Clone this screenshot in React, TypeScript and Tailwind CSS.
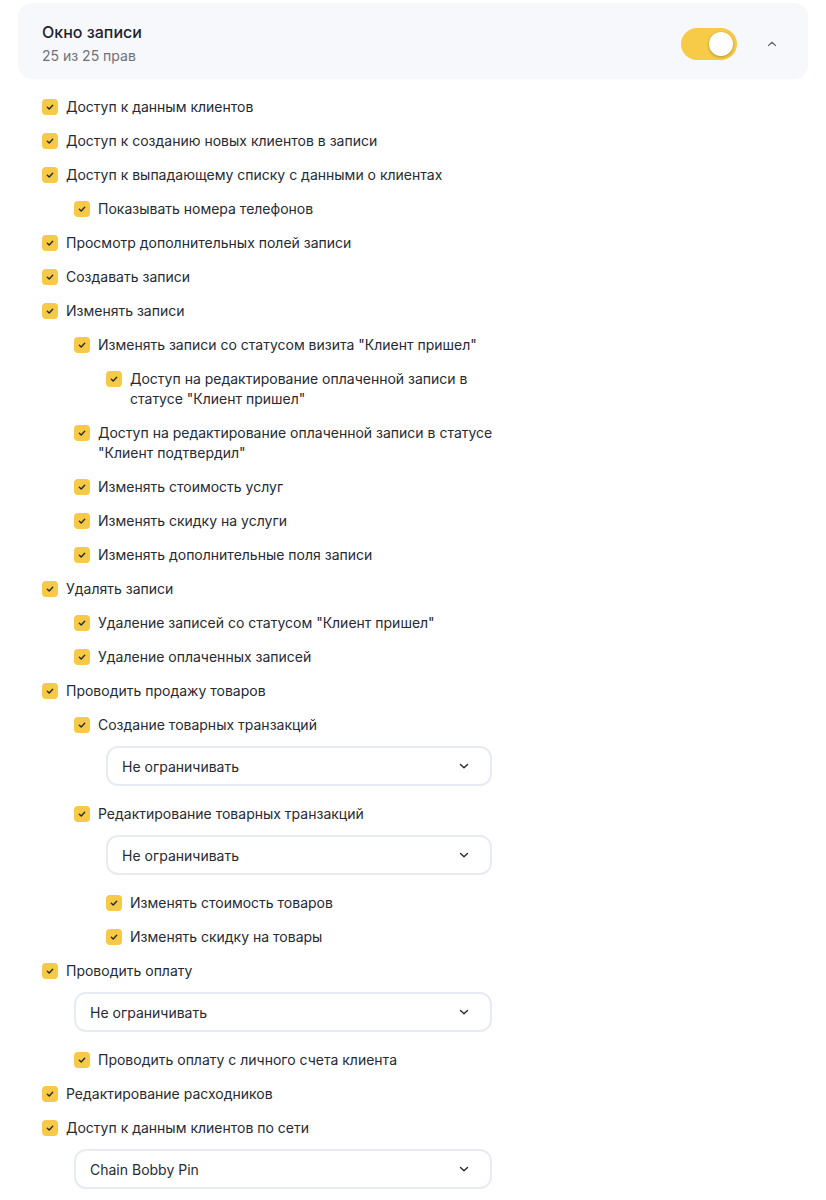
import React from "react";

type Item =
  | { kind: "row"; level: number; text: string }
  | { kind: "select"; level: number; text: string };

const items: Item[] = [
  { kind: "row", level: 0, text: "Доступ к данным клиентов" },
  { kind: "row", level: 0, text: "Доступ к созданию новых клиентов в записи" },
  { kind: "row", level: 0, text: "Доступ к выпадающему списку с данными о клиентах" },
  { kind: "row", level: 1, text: "Показывать номера телефонов" },
  { kind: "row", level: 0, text: "Просмотр дополнительных полей записи" },
  { kind: "row", level: 0, text: "Создавать записи" },
  { kind: "row", level: 0, text: "Изменять записи" },
  { kind: "row", level: 1, text: "Изменять записи со статусом визита \"Клиент пришел\"" },
  { kind: "row", level: 2, text: "Доступ на редактирование оплаченной записи в статусе \"Клиент пришел\"" },
  { kind: "row", level: 1, text: "Доступ на редактирование оплаченной записи в статусе \"Клиент подтвердил\"" },
  { kind: "row", level: 1, text: "Изменять стоимость услуг" },
  { kind: "row", level: 1, text: "Изменять скидку на услуги" },
  { kind: "row", level: 1, text: "Изменять дополнительные поля записи" },
  { kind: "row", level: 0, text: "Удалять записи" },
  { kind: "row", level: 1, text: "Удаление записей со статусом \"Клиент пришел\"" },
  { kind: "row", level: 1, text: "Удаление оплаченных записей" },
  { kind: "row", level: 0, text: "Проводить продажу товаров" },
  { kind: "row", level: 1, text: "Создание товарных транзакций" },
  { kind: "select", level: 2, text: "Не ограничивать" },
  { kind: "row", level: 1, text: "Редактирование товарных транзакций" },
  { kind: "select", level: 2, text: "Не ограничивать" },
  { kind: "row", level: 2, text: "Изменять стоимость товаров" },
  { kind: "row", level: 2, text: "Изменять скидку на товары" },
  { kind: "row", level: 0, text: "Проводить оплату" },
  { kind: "select", level: 1, text: "Не ограничивать" },
  { kind: "row", level: 1, text: "Проводить оплату с личного счета клиента" },
  { kind: "row", level: 0, text: "Редактирование расходников" },
  { kind: "row", level: 0, text: "Доступ к данным клиентов по сети" },
  { kind: "select", level: 1, text: "Chain Bobby Pin" },
];

const indent = ["pl-0", "pl-8", "pl-16"];

function Check() {
  return (
    <span className="mt-[2px] flex h-4 w-4 shrink-0 items-center justify-center rounded-[4px] bg-[#f7c948]">
      <svg width="10" height="10" viewBox="0 0 10 10" fill="none">
        <path d="M2.3 5.2 L4.2 7 L7.7 3.3" stroke="#2a2a2a" strokeWidth="1.4" strokeLinecap="round" strokeLinejoin="round" />
      </svg>
    </span>
  );
}

function Row({ level, text }: { level: number; text: string }) {
  return (
    <div className={`${indent[level]} flex items-start gap-2`}>
      <Check />
      <span className="text-[14px] leading-5 text-[#262a35]">{text}</span>
    </div>
  );
}

function Select({ level, text }: { level: number; text: string }) {
  return (
    <div className={`${indent[level]} mt-[-3px] mb-[4px] pr-[8px]`}>
      <div className="flex h-10 items-center justify-between rounded-[12px] border-2 border-[#e8eaf4] bg-white pl-[14px] pr-[20px]">
        <span className="text-[14px] text-[#262a35]">{text}</span>
        <svg width="12" height="12" viewBox="0 0 12 12" fill="none">
          <path d="M2.5 4.5 L6 7.8 L9.5 4.5" stroke="#2a2a2a" strokeWidth="1.4" strokeLinecap="round" strokeLinejoin="round" />
        </svg>
      </div>
    </div>
  );
}

export default function App() {
  return (
    <div className="min-h-[1200px] bg-white px-[18px] pt-[3px]" style={{ fontFamily: "Inter, 'Noto Sans', sans-serif" }}>
      <div className="flex items-center justify-between rounded-[14px] bg-[#f7f8fc] pb-[13px] pl-6 pr-6 pt-[18px]">
        <div className="flex flex-col">
          <span className="text-[16px] font-medium leading-[22px] text-[#1f2330]">Окно записи</span>
          <span className="mt-[3px] text-[14px] leading-5 text-[#6d717c]">25 из 25 прав</span>
        </div>
        <div className="flex items-center gap-[23px]">
          <div className="relative h-8 w-14 rounded-full bg-[#f7cb47]">
            <span className="absolute right-1 top-1 h-6 w-6 rounded-full bg-white shadow-[0_1px_3px_rgba(0,0,0,0.3)]" />
          </div>
          <div className="flex h-6 w-6 items-center justify-center">
            <svg width="12" height="12" viewBox="0 0 12 12" fill="none">
              <path d="M2.5 7.5 L6 4.2 L9.5 7.5" stroke="#6b6f78" strokeWidth="1.3" strokeLinecap="round" strokeLinejoin="round" />
            </svg>
          </div>
        </div>
      </div>
      <div className="mt-[18px] flex w-[482px] flex-col gap-[14px] pl-6">
        {items.map((it, i) =>
          it.kind === "row" ? (
            <Row key={i} level={it.level} text={it.text} />
          ) : (
            <Select key={i} level={it.level} text={it.text} />
          )
        )}
      </div>
    </div>
  );
}
